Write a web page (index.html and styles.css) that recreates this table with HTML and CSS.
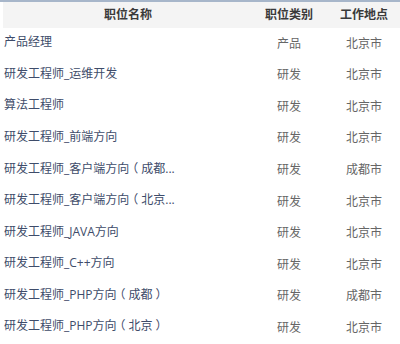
FILE: index.html
```html
<!DOCTYPE html>
<html lang="zh-CN">
<head>
<meta charset="utf-8">
<link rel="stylesheet" href="styles.css">
</head>
<body>
<div class="table">
  <div class="row head">
    <div class="c1">职位名称</div>
    <div class="c2">职位类别</div>
    <div class="c3">工作地点</div>
  </div>
  <div class="row"><div class="c1"><span class="name">产品经理</span></div><div class="c2">产品</div><div class="c3">北京市</div></div>
  <div class="row"><div class="c1"><span class="name">研发工程师_运维开发</span></div><div class="c2">研发</div><div class="c3">北京市</div></div>
  <div class="row"><div class="c1"><span class="name">算法工程师</span></div><div class="c2">研发</div><div class="c3">北京市</div></div>
  <div class="row"><div class="c1"><span class="name">研发工程师_前端方向</span></div><div class="c2">研发</div><div class="c3">北京市</div></div>
  <div class="row"><div class="c1"><span class="name">研发工程师_客户端方向<span class="paren">（</span>成都...</span></div><div class="c2">研发</div><div class="c3">成都市</div></div>
  <div class="row"><div class="c1"><span class="name">研发工程师_客户端方向<span class="paren">（</span>北京...</span></div><div class="c2">研发</div><div class="c3">北京市</div></div>
  <div class="row"><div class="c1"><span class="name">研发工程师_JAVA方向</span></div><div class="c2">研发</div><div class="c3">北京市</div></div>
  <div class="row"><div class="c1"><span class="name">研发工程师_C++方向</span></div><div class="c2">研发</div><div class="c3">北京市</div></div>
  <div class="row"><div class="c1"><span class="name">研发工程师_PHP方向<span class="paren">（</span>成都<span class="paren">）</span></span></div><div class="c2">研发</div><div class="c3">成都市</div></div>
  <div class="row"><div class="c1"><span class="name">研发工程师_PHP方向<span class="paren">（</span>北京<span class="paren">）</span></span></div><div class="c2">研发</div><div class="c3">北京市</div></div>
</div>
</body>
</html>
```
FILE: styles.css
```css
html, body {
  margin: 0;
  padding: 0;
  background: #fff;
  overflow: hidden;
}
body {
  font-family: "Open Sans", "Noto Sans CJK SC", sans-serif;
  font-size: 12px;
  color: #666;
}
.table {
  width: 400px;
  border-top: 2px solid #a7b6ca;
}
.row {
  display: grid;
  grid-template-columns: 250px 72px 78px;
  margin-left: 3px;
  height: 31.57px;
  align-items: center;
}
.row.head {
  height: 26px;
  background: #f4f4f4;
  font-weight: bold;
  color: #3a3a3a;
}
.c1, .c2, .c3 {
  white-space: nowrap;
  line-height: 16px;
}
.c2, .c3 {
  text-align: center;
}
.c1 {
  padding-left: 1px;
  padding-bottom: 3px;
}
.head .c1 {
  text-align: center;
  padding: 0;
}
.name {
  color: #3e4c6a;
}
.paren {
  font-feature-settings: "halt" 1;
  padding: 0 3px;
}
```
